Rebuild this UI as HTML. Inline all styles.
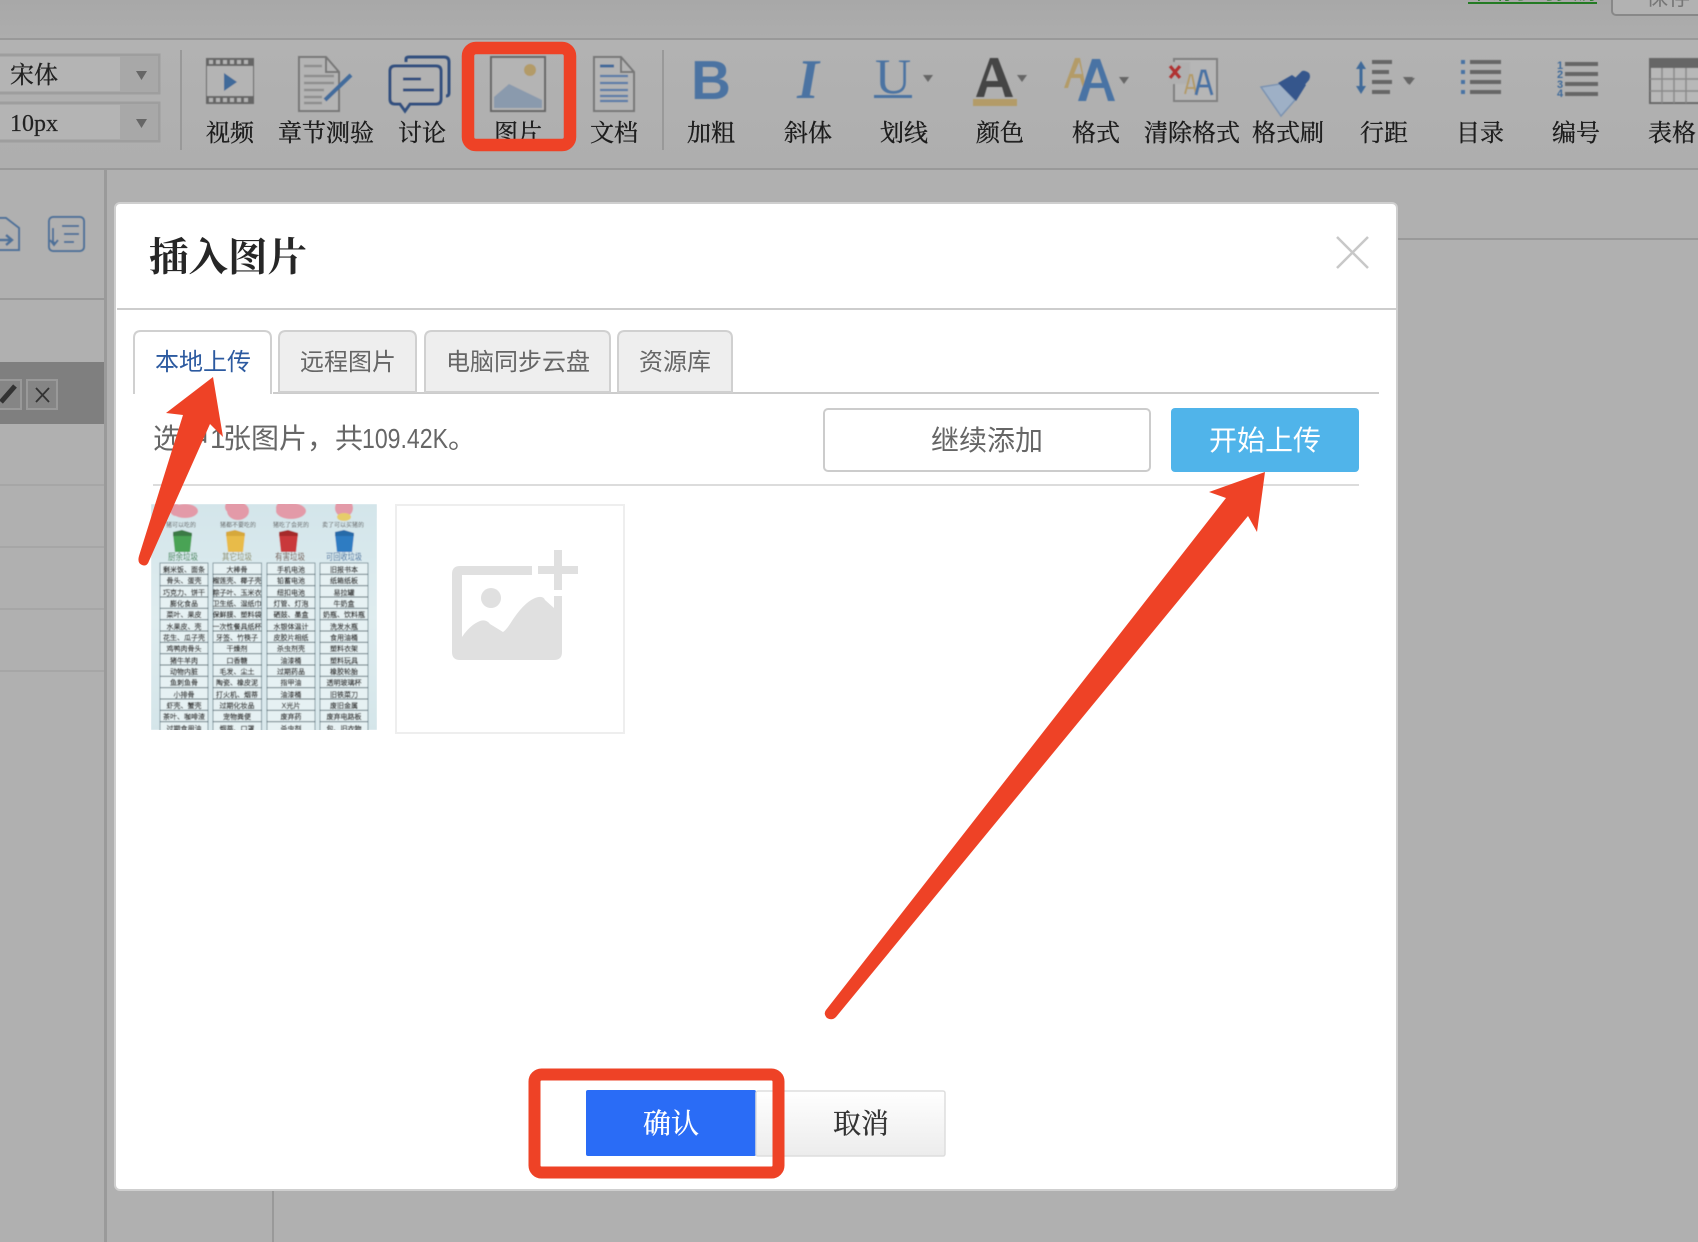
<!DOCTYPE html>
<html lang="zh"><head><meta charset="utf-8"><title>插入图片</title>
<style>
html,body{margin:0;padding:0;background:#b0b0b0;}
body{width:1698px;height:1242px;overflow:hidden;position:relative;}
svg{display:block;position:absolute;left:0;top:0;}
.s{font-family:"Liberation Serif","Noto Serif CJK SC",serif;}
.n{font-family:"Liberation Sans","Noto Sans CJK SC",sans-serif;}
</style></head><body>
<svg width="1698" height="1242" viewBox="0 0 1698 1242" xmlns="http://www.w3.org/2000/svg">
<defs>
<linearGradient id="top" x1="0" y1="0" x2="0" y2="1"><stop offset="0" stop-color="#a8a8a8"/><stop offset="1" stop-color="#adadad"/></linearGradient>
<linearGradient id="tb" x1="0" y1="0" x2="0" y2="1"><stop offset="0" stop-color="#b2b2b2"/><stop offset="1" stop-color="#aeaeae"/></linearGradient>
<linearGradient id="can" x1="0" y1="0" x2="0" y2="1"><stop offset="0" stop-color="#fff"/><stop offset="1" stop-color="#ececec"/></linearGradient>
<linearGradient id="thumb" x1="0" y1="0" x2="0" y2="1"><stop offset="0" stop-color="#d3e5ea"/><stop offset=".5" stop-color="#dfecef"/><stop offset="1" stop-color="#d4e5e9"/></linearGradient>
<filter id="b" x="-5%" y="-5%" width="110%" height="110%"><feGaussianBlur stdDeviation="0.6"/></filter>
<filter id="b2" x="-5%" y="-5%" width="110%" height="110%"><feGaussianBlur stdDeviation="0.45"/></filter>
<filter id="b3" x="-2%" y="-2%" width="104%" height="104%"><feGaussianBlur stdDeviation="0.3"/></filter>
<clipPath id="thumbclip"><rect x="151" y="504" width="226" height="226"/></clipPath>
</defs>

<!-- page background -->
<rect width="1698" height="1242" fill="#b0b0b0"/>
<rect width="1698" height="38" fill="url(#top)"/>
<rect y="38" width="1698" height="2" fill="#999"/>
<rect y="40" width="1698" height="128" fill="url(#tb)"/>
<rect y="168" width="1698" height="2" fill="#999"/>

<!-- top right clipped controls -->
<text x="1468" y="-1" font-size="22" fill="#237a23" class="n">申请学习资源</text>
<rect x="1468" y="2" width="129" height="2" fill="#237a23"/>
<rect x="1612" y="-10" width="100" height="25" rx="4" fill="#b2b2b2" stroke="#888" stroke-width="2"/>
<text x="1646" y="5" font-size="22" fill="#777" class="n">保存</text>

<!-- font selects -->
<g>
<rect x="-4" y="55" width="163" height="38" fill="#b4b4b4" stroke="#9e9e9e" stroke-width="3"/>
<rect x="120" y="56" width="38" height="36" fill="#a8a8a8"/>
<path d="M136 71h11l-5.500 9z" fill="#666"/>
<text x="10" y="83" font-size="24" fill="#222" stroke="#222" stroke-width=".35" class="s">宋体</text>
<rect x="-4" y="103" width="163" height="38" fill="#b4b4b4" stroke="#9e9e9e" stroke-width="3"/>
<rect x="120" y="104" width="38" height="36" fill="#a8a8a8"/>
<path d="M136 119h11l-5.500 9z" fill="#666"/>
<text x="10" y="131" font-size="24" fill="#222" stroke="#222" stroke-width=".2" class="s">10px</text>
</g>
<rect x="180" y="50" width="2" height="100" fill="#999"/>
<rect x="662" y="50" width="2" height="100" fill="#999"/>

<!-- toolbar labels -->
<g class="s" font-size="24" fill="#1c1c1c" stroke="#1c1c1c" stroke-width=".35" text-anchor="middle" filter="url(#b3)">
<text x="230" y="141">视频</text>
<text x="326" y="141">章节测验</text>
<text x="422" y="141">讨论</text>
<text x="518" y="141">图片</text>
<text x="614" y="141">文档</text>
<text x="711" y="141">加粗</text>
<text x="808" y="141">斜体</text>
<text x="904" y="141">划线</text>
<text x="1000" y="141">颜色</text>
<text x="1096" y="141">格式</text>
<text x="1192" y="141">清除格式</text>
<text x="1288" y="141">格式刷</text>
<text x="1384" y="141">行距</text>
<text x="1480" y="141">目录</text>
<text x="1576" y="141">编号</text>
<text x="1672" y="141">表格</text>
</g>

<!-- toolbar icons -->
<g filter="url(#b)">
<!-- video -->
<rect x="206" y="58" width="48" height="46" fill="#666"/>
<rect x="207" y="66" width="46" height="30" fill="#b4b4b4"/>
<g fill="#b4b4b4"><rect x="209" y="60" width="4" height="4"/><rect x="216" y="60" width="4" height="4"/><rect x="223" y="60" width="4" height="4"/><rect x="230" y="60" width="4" height="4"/><rect x="237" y="60" width="4" height="4"/><rect x="244" y="60" width="4" height="4"/>
<rect x="209" y="98" width="4" height="4"/><rect x="216" y="98" width="4" height="4"/><rect x="223" y="98" width="4" height="4"/><rect x="230" y="98" width="4" height="4"/><rect x="237" y="98" width="4" height="4"/><rect x="244" y="98" width="4" height="4"/></g>
<path d="M224 73l13 9-13 9z" fill="#3f6a9a"/>
<!-- quiz -->
<path d="M299 57h27l13 15v39h-40z" fill="#b4b4b4" stroke="#777" stroke-width="2"/>
<path d="M326 57v15h13" fill="none" stroke="#777" stroke-width="2"/>
<path d="M304 66h18M304 76h30M304 83h30M304 90h20M304 97h18M304 103h18" stroke="#8e8e8e" stroke-width="2.500"/>
<path d="M325 100l26-25" stroke="#436c9c" stroke-width="4"/>
<!-- discussion -->
<path d="M406 62v-3q0-2 3-2h35q5 0 5 5v31q0 3-3 3" fill="none" stroke="#30507f" stroke-width="3"/>
<path d="M400 66h36q5 0 5 5v28q0 5-5 5h-26l-5 7-5-7h-5q-5 0-5-5v-28q0-5 5-5z" fill="#b2b2b2" stroke="#30507f" stroke-width="3"/>
<path d="M403 79h18M403 90h31" stroke="#30507f" stroke-width="3"/>
<!-- image -->
<rect x="491" y="57" width="54" height="54" fill="#b4b4b4" stroke="#666" stroke-width="2"/>
<ellipse cx="530" cy="70" rx="6" ry="6" fill="#b39b68"/>
<path d="M494 108v-11l15-13 33 16v8z" fill="#8a9aad"/>
<!-- doc -->
<path d="M594 57h27l13 15v39h-40z" fill="#b4b4b4" stroke="#777" stroke-width="2"/>
<path d="M621 57v15h13" fill="none" stroke="#777" stroke-width="2"/>
<path d="M600 66h14" stroke="#3f6a9a" stroke-width="3"/>
<path d="M600 76h28M600 83h28M600 90h28M600 96h28M600 101h28" stroke="#5a7ca8" stroke-width="2.200"/>
<!-- B I U -->
<text x="711" y="99" font-size="55" font-weight="bold" fill="#4c73a2" text-anchor="middle" class="n">B</text>
<text x="808" y="98" font-size="56" font-weight="bold" font-style="italic" fill="#4c73a2" text-anchor="middle" class="s">I</text>
<text x="893" y="93" font-size="50" fill="#4c73a2" text-anchor="middle" class="s">U</text>
<rect x="874" y="95" width="38" height="3" fill="#4c73a2"/>
<path d="M923 75h10l-5 7zM1017 75h10l-5 7zM1119 77h10l-5 7zM1403 77h10l-5 7z" fill="#666"/>
<!-- A colour -->
<path d="M976 97l14-39h8l15 39h-8l-3-10h-15l-3 10zM986 81h12l-6-17z" fill="#444" fill-rule="evenodd"/>
<rect x="973" y="99" width="44" height="7" fill="#b39b68"/>
<!-- AA -->
<path d="M1064 88l11-30h5l6 30h-3l-3-10h-9l-3 10zM1074 74h8l-3-12z" fill="#b39b68" fill-rule="evenodd"/>
<path d="M1078 101l14-42h8l15 42h-7l-4-13h-14l-4 13zM1091 83h11l-5-16z" fill="#4a73a4" fill-rule="evenodd"/>
<!-- clear -->
<rect x="1174" y="59" width="43" height="42" fill="#b6b6b6" stroke="#808080" stroke-width="2"/>
<rect x="1168" y="62" width="22" height="22" fill="#b0b0b0"/>
<path d="M1170 66l10 12M1180 66l-10 12" stroke="#b03030" stroke-width="3.500"/>
<path d="M1185 94l5-19h2l4 19M1187 88h7" fill="none" stroke="#b39b68" stroke-width="2"/>
<path d="M1196 95l6-24h3l7 24M1199 86h10" fill="none" stroke="#4a73a4" stroke-width="3"/>
<!-- brush -->
<path d="M1261 87l19-3 15 16-14 16z" fill="#9eb0c6" stroke="#7c93b1" stroke-width="1.500"/>
<path d="M1278 83l14-8 14 10-10 16z" fill="#36568c"/>
<path d="M1295 78l7-7q3-1 7 2q2 3 0 7l-6 7z" fill="#36568c"/>
<!-- line height -->
<path d="M1361 64v27" stroke="#3f6a9a" stroke-width="3"/>
<path d="M1356 69l5-8 5 8zM1356 86l5 8 5-8z" fill="#3f6a9a"/>
<path d="M1372 62h20M1372 72h17M1372 82h20M1372 92h18" stroke="#666" stroke-width="4"/>
<path d="M1404 78h11l-5.500 7z" fill="#666"/>
<!-- catalog -->
<g fill="#4a73a4"><rect x="1461" y="60" width="4" height="4"/><rect x="1461" y="70" width="4" height="4"/><rect x="1461" y="80" width="4" height="4"/><rect x="1461" y="90" width="4" height="4"/></g>
<path d="M1470 62h31M1470 72h31M1470 82h31M1470 92h31" stroke="#666" stroke-width="4"/>
<!-- numbered -->
<g fill="#3f6a9a" font-size="11" font-weight="bold" class="n"><text x="1557" y="69">1</text><text x="1557" y="78">2</text><text x="1557" y="88">3</text><text x="1557" y="97">4</text></g>
<path d="M1565 64h33M1565 74h33M1565 84h33M1565 94h33" stroke="#666" stroke-width="4"/>
<!-- table -->
<rect x="1650" y="59" width="60" height="44" fill="#b8b8b8" stroke="#666" stroke-width="2"/>
<rect x="1649" y="58" width="60" height="10" fill="#666"/>
<path d="M1662 68v35M1674 68v35M1686 68v35M1650 79h60M1650 91h60" stroke="#8a8a8a" stroke-width="1.500"/>
</g>

<!-- left panel -->
<rect x="104" y="170" width="3" height="1072" fill="#9a9a9a"/>
<rect x="0" y="298" width="105" height="2" fill="#999"/>
<rect x="0" y="362" width="104" height="62" fill="#7f7f7f"/>
<g fill="#a6a6a6"><rect y="484" width="104" height="2"/><rect y="546" width="104" height="2"/><rect y="608" width="104" height="2"/><rect y="670" width="104" height="2"/></g>
<rect x="272" y="1190" width="2" height="52" fill="#999"/>
<rect x="1398" y="238" width="300" height="2" fill="#999"/>
<g filter="url(#b)">
<path d="M-8 218h14l13 10v22h-27z" fill="#b0b0b0" stroke="#4d7199" stroke-width="2"/>
<path d="M-2 240h13M6 235l6 5-6 5" fill="none" stroke="#4d7199" stroke-width="2.500"/>
<rect x="49" y="217" width="35" height="34" rx="4" fill="#b0b0b0" stroke="#4d7199" stroke-width="2"/>
<path d="M53 228v13q0 2 3 2M50 240l4 5 4-5" fill="none" stroke="#4d7199" stroke-width="2"/>
<path d="M62 226h17M64 234h15M64 242h10" stroke="#4d7199" stroke-width="2"/>
</g>
<rect x="-5" y="380" width="26" height="29" fill="#858585" stroke="#999" stroke-width="2"/>
<path d="M1 402l14-16" stroke="#333" stroke-width="5"/>
<rect x="27" y="380" width="30" height="29" fill="#858585" stroke="#999" stroke-width="2"/>
<path d="M36 388l13 14M49 388l-13 14" stroke="#333" stroke-width="1.800"/>

<!-- modal -->
<rect x="115" y="203" width="1282" height="987" rx="5" fill="#fff" stroke="#cfcfcf" stroke-width="2"/>
<text x="149" y="271" font-size="39.500" font-weight="700" fill="#262626" class="s">插入图片</text>
<rect x="117" y="308" width="1280" height="2" fill="#cdcdcd"/>
<path d="M1337 237l31 31M1368 237l-31 31" stroke="#c8c8c8" stroke-width="2.500"/>

<!-- tabs -->
<rect x="273" y="392" width="1106" height="2" fill="#ccc"/>
<path d="M134 394v-56q0-7 7-7h123q7 0 7 7v56" fill="#fff" stroke="#d0d0d0" stroke-width="2"/>
<path d="M279 392v-54q0-7 7-7h123q7 0 7 7v54z" fill="#eee" stroke="#d0d0d0" stroke-width="2"/>
<path d="M425 392v-54q0-7 7-7h171q7 0 7 7v54z" fill="#eee" stroke="#d0d0d0" stroke-width="2"/>
<path d="M618 392v-54q0-7 7-7h114q0 0 0 0v54z" fill="none"/>
<path d="M618 392v-54q0-7 7-7h100q7 0 7 7v54z" fill="#eee" stroke="#d0d0d0" stroke-width="2"/>
<g class="n" font-size="24" text-anchor="middle">
<text x="203" y="370" fill="#2c5aa0">本地上传</text>
<text x="348" y="370" fill="#666">远程图片</text>
<text x="518" y="370" fill="#666">电脑同步云盘</text>
<text x="675" y="370" fill="#666">资源库</text>
</g>

<!-- status row -->
<g font-size="28" fill="#666" class="n">
<text x="153" y="448">选中</text>
<text x="210" y="448">1</text>
<text x="223" y="448">张图片，共</text>
<text x="362" y="448" textLength="86" lengthAdjust="spacingAndGlyphs">109.42K</text>
<text x="448" y="448">。</text>
</g>
<rect x="824" y="409" width="326" height="62" rx="4" fill="#fff" stroke="#ccc" stroke-width="2"/>
<text x="987" y="450" font-size="28" fill="#666" text-anchor="middle" class="n">继续添加</text>
<rect x="1171" y="408" width="188" height="64" rx="4" fill="#50b4ea"/>
<text x="1265" y="450" font-size="28" fill="#fff" text-anchor="middle" class="n">开始上传</text>
<rect x="153" y="484" width="1206" height="2" fill="#dcdcdc"/>

<!-- thumbnail -->
<g clip-path="url(#thumbclip)"><g filter="url(#b2)">
<rect x="151" y="504" width="226" height="226" fill="url(#thumb)"/>
<g fill="#e39aa8">
<ellipse cx="185" cy="511" rx="13" ry="7"/><ellipse cx="176" cy="510" rx="6" ry="6"/>
<ellipse cx="238" cy="511" rx="11" ry="9"/><ellipse cx="231" cy="507" rx="6" ry="6"/>
<ellipse cx="291" cy="511" rx="15" ry="8"/><ellipse cx="282" cy="508" rx="6" ry="6"/>
<ellipse cx="344" cy="508" rx="9" ry="9"/><ellipse cx="344" cy="517" rx="7" ry="4" fill="#e6cd6a"/>
</g>
<g font-size="6" fill="#555" text-anchor="middle" class="n"><text x="181" y="527">猪可以吃的</text><text x="238" y="527">猪都不要吃的</text><text x="291" y="527">猪吃了会死的</text><text x="343" y="527">卖了可以买猪的</text></g>
<path d="M173 534h19l-2 18h-15z" fill="#4aa355"/><path d="M173 532l9-2 10 3v3h-19z" fill="#3a7a45"/>
<path d="M226 534h19l-2 18h-15z" fill="#e8bb4a"/><path d="M226 532l9-2 10 3v3h-19z" fill="#d6a83a"/>
<path d="M279 534h19l-2 18h-15z" fill="#c9393a"/><path d="M279 532l9-2 10 3v3h-19z" fill="#a52b2c"/>
<path d="M335 534h19l-2 18h-15z" fill="#2f7cc2"/><path d="M335 532l9-2 10 3v3h-19z" fill="#256aa8"/>
<g font-size="9" text-anchor="middle" class="n"><text x="183" y="560" fill="#2d7d46" textLength="30" lengthAdjust="spacingAndGlyphs">厨余垃圾</text><text x="237" y="560" fill="#8a8a60" textLength="30" lengthAdjust="spacingAndGlyphs">其它垃圾</text><text x="290" y="560" fill="#6a4a3a" textLength="30" lengthAdjust="spacingAndGlyphs">有害垃圾</text><text x="344" y="560" fill="#35689a" textLength="36" lengthAdjust="spacingAndGlyphs">可回收垃圾</text></g>
<g fill="#e6f1f3" stroke="#6f8790" stroke-width="0.800">
<rect x="160" y="563" width="48" height="180"/><rect x="213" y="563" width="48.500" height="180"/><rect x="267" y="563" width="48" height="180"/><rect x="320" y="563" width="48" height="180"/>
</g>
<path d="M160 574.300h208M160 585.700h208M160 597h208M160 608.300h208M160 619.700h208M160 631h208M160 642.300h208M160 653.700h208M160 665h208M160 676.300h208M160 687.700h208M160 699h208M160 710.300h208M160 721.700h208" stroke="#4f6670" stroke-width="0.900"/>
<rect x="208.500" y="563" width="4" height="170" fill="#d9e8ec"/><rect x="262" y="563" width="4.500" height="170" fill="#d9e8ec"/><rect x="315.500" y="563" width="4" height="170" fill="#d9e8ec"/>
<g font-size="7" fill="#2c2c2c" stroke="#2c2c2c" stroke-width=".2" text-anchor="middle" class="n">
<text x="184" y="572">剩米饭、面条</text><text x="184" y="583">骨头、蛋壳</text><text x="184" y="595">巧克力、饼干</text><text x="184" y="606">膨化食品</text><text x="184" y="617">菜叶、果皮</text><text x="184" y="629">水果皮、壳</text><text x="184" y="640">花生、瓜子壳</text><text x="184" y="651">鸡鸭肉骨头</text><text x="184" y="663">猪牛羊肉</text><text x="184" y="674">动物内脏</text><text x="184" y="685">鱼刺鱼骨</text><text x="184" y="697">小排骨</text><text x="184" y="708">虾壳、蟹壳</text><text x="184" y="719">茶叶、咖啡渣</text><text x="184" y="731">过期食用油</text>
<text x="237" y="572">大棒骨</text><text x="237" y="583">榴莲壳、椰子壳</text><text x="237" y="595">粽子叶、玉米衣</text><text x="237" y="606">卫生纸、湿纸巾</text><text x="237" y="617">保鲜膜、塑料袋</text><text x="237" y="629">一次性餐具纸杯</text><text x="237" y="640">牙签、竹筷子</text><text x="237" y="651">干燥剂</text><text x="237" y="663">口香糖</text><text x="237" y="674">毛发、尘土</text><text x="237" y="685">陶瓷、橡皮泥</text><text x="237" y="697">打火机、烟蒂</text><text x="237" y="708">过期化妆品</text><text x="237" y="719">宠物粪便</text><text x="237" y="731">烟蒂、口罩</text>
<text x="291" y="572">手机电池</text><text x="291" y="583">铅蓄电池</text><text x="291" y="595">纽扣电池</text><text x="291" y="606">灯管、灯泡</text><text x="291" y="617">硒鼓、墨盒</text><text x="291" y="629">水银体温计</text><text x="291" y="640">皮胶片相纸</text><text x="291" y="651">杀虫剂壳</text><text x="291" y="663">油漆桶</text><text x="291" y="674">过期药品</text><text x="291" y="685">指甲油</text><text x="291" y="697">油漆桶</text><text x="291" y="708">X光片</text><text x="291" y="719">废弃药</text><text x="291" y="731">杀虫剂</text>
<text x="344" y="572">旧报书本</text><text x="344" y="583">纸箱纸板</text><text x="344" y="595">易拉罐</text><text x="344" y="606">牛奶盒</text><text x="344" y="617">奶瓶、饮料瓶</text><text x="344" y="629">洗发水瓶</text><text x="344" y="640">食用油桶</text><text x="344" y="651">塑料衣架</text><text x="344" y="663">塑料玩具</text><text x="344" y="674">橡胶轮胎</text><text x="344" y="685">透明玻璃杯</text><text x="344" y="697">旧铁菜刀</text><text x="344" y="708">废旧金属</text><text x="344" y="719">废弃电路板</text><text x="344" y="731">包、旧衣物</text>
</g>
</g></g>

<!-- placeholder -->
<rect x="396" y="505" width="228" height="228" fill="#fff" stroke="#eeeeee" stroke-width="2"/>
<g fill="#e0e0e0">
<path d="M452 574q0-8 8-8h72v9h-70v62q8-12 18-16q6-2 10 3l13 8q3-2 7-8q13-21 25-26q8-3 10 2l9 8v-12h8v56q0 8-8 8h-94q-8 0-8-8z"/>
<circle cx="491" cy="598" r="10"/>
<rect x="554" y="550" width="8" height="40"/>
<rect x="538" y="566" width="40" height="8"/>
</g>

<!-- footer buttons -->
<rect x="586" y="1090" width="170" height="66" rx="2" fill="#2a6cf6"/>
<text x="671" y="1133" font-size="28" fill="#fff" stroke="#fff" stroke-width=".35" text-anchor="middle" class="s">确认</text>
<rect x="756" y="1091" width="189" height="65" rx="2" fill="url(#can)" stroke="#ddd" stroke-width="1.500"/>
<text x="861" y="1133" font-size="28" fill="#333" stroke="#333" stroke-width=".35" text-anchor="middle" class="s">取消</text>

<!-- red annotations -->
<rect x="468" y="48" width="102" height="97" rx="8" fill="none" stroke="#ee4226" stroke-width="12.500"/>
<rect x="534.500" y="1074.500" width="244" height="98" rx="7" fill="none" stroke="#ee4226" stroke-width="12"/>
<path d="M213 377L166 413L183 415L139 556Q137 563 142 565Q147 567 149 561L210 424L223 437Z" fill="#ee4226"/>
<path d="M1265 472L1209 492L1226 498L826 1010Q823 1014 827 1018Q832 1021 836 1017L1248 516L1257 532Z" fill="#ee4226"/>
</svg>
</body></html>
